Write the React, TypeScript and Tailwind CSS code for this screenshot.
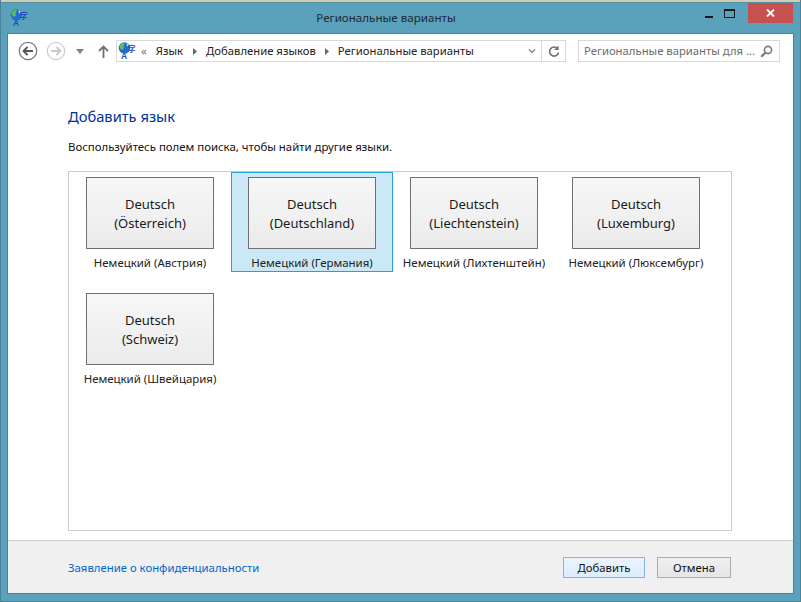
import React from "react";

const font = { fontFamily: '"Noto Sans", "Open Sans", sans-serif' };

function LangIcon({ size = 18 }: { size?: number }) {
  return (
    <svg width={size} height={size} viewBox="0 0 18 18" className="shrink-0 overflow-visible">
      <circle cx="6.5" cy="6" r="5.8" fill="#1f6fd0" />
      <path d="M1.5 3.5 L4.5 1 L7 1.5 L5.5 4 L6 6.5 L3.5 8 L2 6 Z" fill="#58c060" />
      <path d="M8.5 1 L11 3 L9 4.5 Z" fill="#c8f0c8" />
      <text x="3" y="17" fontSize="8.5" fontWeight="700" fill="#1c4fc4" fontFamily="Liberation Sans">A</text>
      <text x="10" y="9.5" fontSize="7.5" fontWeight="700" fill="#1c45b8" fontFamily="Noto Sans CJK SC">字</text>
    </svg>
  );
}

function Tile({ a, b, label, selected }: { a: string; b: string; label: string; selected?: boolean }) {
  return (
    <div
      className={
        "w-[162px] h-[100px] mb-[16px] border flex flex-col items-center pt-[4px] " +
        (selected ? "bg-[#cbe8f6] border-[#26a0da]" : "border-transparent")
      }
    >
      <div className="w-[128px] h-[72px] shrink-0 border border-[#707070] bg-gradient-to-b from-[#f7f7f7] to-[#ebebeb] flex flex-col items-center justify-center pt-[2px] text-[13px] leading-[19px] text-[#1a1a1a]">
        <span>{a}</span>
        <span>{b}</span>
      </div>
      <div className="mt-[5px] text-[11.45px] leading-[18px] whitespace-nowrap text-[#222]">{label}</div>
    </div>
  );
}

export default function App() {
  return (
    <div style={font} className="w-[801px] h-[602px] bg-[#5aa2bc] border border-[#4a8398] border-t-0 flex flex-col overflow-hidden">
      <div className="h-[2px] shrink-0 bg-[#d6ccb4]" />
      <div className="h-[1px] shrink-0 bg-[#4f90a8]" />
      <div className="h-[30px] flex items-start pl-[9px] pr-[7px] shrink-0">
        <div className="mt-[6px]"><LangIcon size={18} /></div>
        <div className="flex-1 text-center text-[11.6px] leading-[20px] mt-[5px] text-[#1f2b33] ml-[44px]">Региональные варианты</div>
        <div className="w-[18px] flex justify-center mt-[13px]"><div className="w-[8px] h-[2px] bg-[#1a1a1a]" /></div>
        <div className="w-[22px] flex justify-center mt-[6px] mr-[8px]"><div className="w-[11px] h-[9px] border border-[#1a1a1a] border-t-2" /></div>
        <div className="w-[45px] h-[20px] bg-[#c75050] flex items-center justify-center">
          <svg width="9" height="8" viewBox="0 0 9 8"><path d="M1 0.5 L8 7.5 M8 0.5 L1 7.5" stroke="#fff" strokeWidth="1.8" /></svg>
        </div>
      </div>
      <div className="flex-1 mx-[6px] mb-[7px] bg-white border border-[#4a8398] flex flex-col min-h-0">
        <div className="h-[34px] shrink-0 flex items-center pl-[10px] pr-[12px]">
          <svg width="20" height="20" viewBox="0 0 20 20"><circle cx="10" cy="10" r="8.7" fill="#fff" stroke="#7a7a7a" strokeWidth="1.3" /><path d="M15 10 H6 M9.5 6 L5.5 10 L9.5 14" fill="none" stroke="#555" strokeWidth="1.8" /></svg>
          <svg width="20" height="20" viewBox="0 0 20 20" className="ml-[8px]"><circle cx="10" cy="10" r="8.7" fill="#fff" stroke="#d0d0d0" strokeWidth="1.3" /><path d="M5 10 H14 M10.5 6 L14.5 10 L10.5 14" fill="none" stroke="#c8c8c8" strokeWidth="1.8" /></svg>
          <svg width="8" height="5" viewBox="0 0 8 5" className="ml-[10px]"><path d="M0 0 H8 L4 5 Z" fill="#808080" /></svg>
          <svg width="11" height="13" viewBox="0 0 11 13" className="ml-[14px]"><path d="M5.5 13 V2 M1 6 L5.5 1.5 L10 6" fill="none" stroke="#707070" strokeWidth="1.8" /></svg>
          <div className="ml-[7px] w-[450px] h-[22px] border border-[#d9d9d9] flex items-center text-[11.3px] text-[#222] whitespace-nowrap">
            <div className="ml-[1px]"><LangIcon size={18} /></div>
            <span className="ml-[5px] text-[#777]">«</span>
            <span className="ml-[9px]">Язык</span>
            <svg width="4" height="7" viewBox="0 0 4 7" className="ml-[10px] mr-[9px]"><path d="M0 0 L4 3.5 L0 7 Z" fill="#666" /></svg>
            <span>Добавление языков</span>
            <svg width="4" height="7" viewBox="0 0 4 7" className="mx-[9px]"><path d="M0 0 L4 3.5 L0 7 Z" fill="#666" /></svg>
            <span>Региональные варианты</span>
            <div className="flex-1" />
            <svg width="8" height="5" viewBox="0 0 8 5" className="mr-[5px]"><path d="M1 0.5 L4 3.5 L7 0.5" fill="none" stroke="#888" strokeWidth="1.5" /></svg>
            <div className="w-[24px] h-full border-l border-[#d9d9d9] flex items-center justify-center">
              <svg width="12" height="13" viewBox="0 0 12 13"><path d="M9.8 4 A4.5 4.5 0 1 0 10.5 7.5" fill="none" stroke="#707070" strokeWidth="1.6" /><path d="M10.5 0.5 V5 H6 Z" fill="#707070" /></svg>
            </div>
          </div>
          <div className="ml-[12px] w-[202px] h-[22px] border border-[#d9d9d9] flex items-center pl-[5px] pr-[6px] text-[11.3px] text-[#6d6d6d] whitespace-nowrap">
            <span className="flex-1">Региональные варианты для ...</span>
            <svg width="13" height="13" viewBox="0 0 13 13"><circle cx="8" cy="5" r="3.6" fill="none" stroke="#777" strokeWidth="1.6" /><path d="M5.3 7.7 L1.2 11.8" stroke="#777" strokeWidth="2.2" /></svg>
          </div>
        </div>
        <div className="flex-1 min-h-0 pl-[60px] pr-[61px] flex flex-col">
          <div className="mt-[37px] text-[14.7px] leading-[22px] text-[#003399]">Добавить язык</div>
          <div className="mt-[11px] text-[11.4px] leading-[18px] text-[#111]">Воспользуйтесь полем поиска, чтобы найти другие языки.</div>
          <div className="mt-[15px] h-[360px] border border-[#cccccc] flex flex-wrap content-start">
            <Tile a="Deutsch" b="(Österreich)" label="Немецкий (Австрия)" />
            <Tile a="Deutsch" b="(Deutschland)" label="Немецкий (Германия)" selected />
            <Tile a="Deutsch" b="(Liechtenstein)" label="Немецкий (Лихтенштейн)" />
            <Tile a="Deutsch" b="(Luxemburg)" label="Немецкий (Люксембург)" />
            <Tile a="Deutsch" b="(Schweiz)" label="Немецкий (Швейцария)" />
          </div>
        </div>
        <div className="h-[53px] shrink-0 bg-[#f0f0f0] border-t border-[#cccccc] flex items-center pl-[60px] pr-[62px] pt-[1px] text-[11.35px]">
          <span className="text-[#0066cc] flex-1">Заявление о конфиденциальности</span>
          <div className="w-[82px] h-[21px] border border-[#7eb4ea] bg-gradient-to-b from-[#ecf4fc] to-[#dcecfc] flex items-center justify-center text-[#111]">Добавить</div>
          <div className="ml-[12px] w-[74px] h-[21px] border border-[#acacac] bg-gradient-to-b from-[#f0f0f0] to-[#e5e5e5] flex items-center justify-center text-[#111]">Отмена</div>
        </div>
      </div>
    </div>
  );
}
